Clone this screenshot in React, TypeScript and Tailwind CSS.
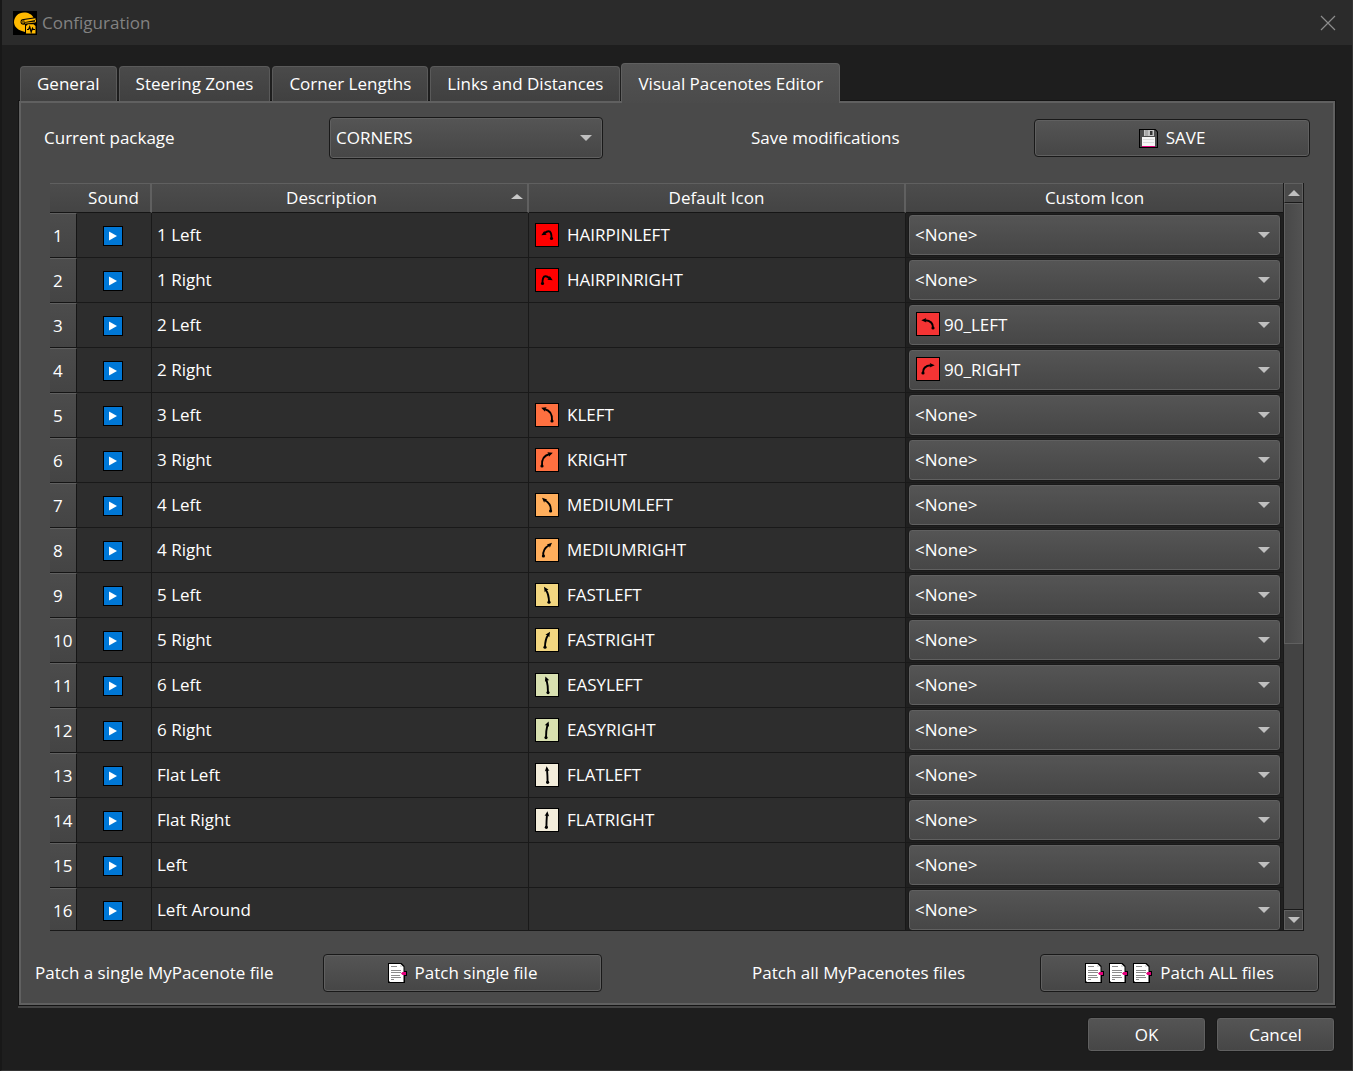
import { useState } from 'react';
import type { ReactNode } from 'react';

type Curve = { path: string; tip: [number, number]; angle: number; dot: [number, number] };

const curves: Record<string, Curve> = {
  hairpin: { path: 'M16.5 15.5C16.6 11 15.8 8.2 13.4 8.3C11.4 8.4 10.2 9.8 9 10.8', tip: [6.3, 12.2], angle: 150, dot: [16.5, 15.5] },
  ninety: { path: 'M17 16C17.2 11 14.5 8.6 9 8.3', tip: [5.3, 8.3], angle: 180, dot: [17, 16] },
  k: { path: 'M17 18C17.6 11.5 15.5 7.5 9.5 6', tip: [6.2, 4.8], angle: 200, dot: [17, 18] },
  medium: { path: 'M15.6 18C16.4 13 13.6 9.2 9.6 7', tip: [7, 4.8], angle: 222, dot: [15.6, 18] },
  fast: { path: 'M14 19.2C14 14 12.8 9.6 10.6 6.6', tip: [9, 3.8], angle: 238, dot: [14, 19.2] },
  easy: { path: 'M13 19.6C13.2 15 12.6 11 11.4 6', tip: [10.4, 3.4], angle: 250, dot: [13, 19.6] },
  flat: { path: 'M12.6 19.3C12.6 15 12.4 11 12 6', tip: [11.6, 3.2], angle: 264, dot: [12.6, 19.3] },
};

type Note = { curve: string; right?: boolean; fill: string; name: string };
type Row = { description: string; icon?: Note; custom?: Note };

const rows: Row[] = [
  { description: '1 Left', icon: { curve: 'hairpin', fill: '#ff0000', name: 'HAIRPINLEFT' } },
  { description: '1 Right', icon: { curve: 'hairpin', right: true, fill: '#ff0000', name: 'HAIRPINRIGHT' } },
  { description: '2 Left', custom: { curve: 'ninety', fill: '#f53434', name: '90_LEFT' } },
  { description: '2 Right', custom: { curve: 'ninety', right: true, fill: '#f53434', name: '90_RIGHT' } },
  { description: '3 Left', icon: { curve: 'k', fill: '#ff7040', name: 'KLEFT' } },
  { description: '3 Right', icon: { curve: 'k', right: true, fill: '#ff7040', name: 'KRIGHT' } },
  { description: '4 Left', icon: { curve: 'medium', fill: '#ffae5c', name: 'MEDIUMLEFT' } },
  { description: '4 Right', icon: { curve: 'medium', right: true, fill: '#ffae5c', name: 'MEDIUMRIGHT' } },
  { description: '5 Left', icon: { curve: 'fast', fill: '#f2d680', name: 'FASTLEFT' } },
  { description: '5 Right', icon: { curve: 'fast', right: true, fill: '#f2d680', name: 'FASTRIGHT' } },
  { description: '6 Left', icon: { curve: 'easy', fill: '#d8e0b0', name: 'EASYLEFT' } },
  { description: '6 Right', icon: { curve: 'easy', right: true, fill: '#d8e0b0', name: 'EASYRIGHT' } },
  { description: 'Flat Left', icon: { curve: 'flat', fill: '#f3eddb', name: 'FLATLEFT' } },
  { description: 'Flat Right', icon: { curve: 'flat', right: true, fill: '#f3eddb', name: 'FLATRIGHT' } },
  { description: 'Left' },
  { description: 'Left Around' },
];

const tabs = ['General', 'Steering Zones', 'Corner Lengths', 'Links and Distances', 'Visual Pacenotes Editor'];

function NoteIcon({ note }: { note: Note }) {
  const c = curves[note.curve];
  return (
    <svg className="size-6 shrink-0" viewBox="0 0 24 24" aria-hidden="true">
      <rect x="0.5" y="0.5" width="23" height="23" fill={note.fill} stroke="#000" />
      <g transform={note.right ? 'translate(24 0) scale(-1 1)' : undefined}>
        <path d={c.path} fill="none" stroke="#000" strokeWidth="1.9" />
        <circle cx={c.dot[0]} cy={c.dot[1]} r="1.6" />
        <path d="M0 0L-5 -2.3L-4 0L-5 2.3Z" transform={`translate(${c.tip[0]} ${c.tip[1]}) rotate(${c.angle})`} />
      </g>
    </svg>
  );
}

function AppLogo() {
  return (
    <svg className="size-6" viewBox="0 0 24 24" aria-hidden="true">
      <rect width="24" height="24" fill="#000" />
      <path d="M1 11.5C1 5.5 5.5 1.500 11 1.500C15.500 1.500 19 3.500 20.500 6.500L10.500 8C8.500 8 7.500 9.300 7.500 11C7.500 12.500 8.500 13.800 10.500 13.800L12 13.500V21C5.500 19.500 1.500 16.500 1 11.500Z" fill="#ffb900" />
      <circle cx="10" cy="10.900" r="1.200" fill="none" stroke="#ffb900" strokeWidth="0.800" />
      <path d="M11 9L22.500 7.200V9L12 11Z" fill="#ffb900" />
      <path d="M12 12.200L22.500 11V9" fill="none" stroke="#ffb900" strokeWidth="0.900" />
      <path d="M15 13.200H20.500L22.500 15V22.500H13V15Z" fill="#ffb900" />
      <path d="M14 18.500H15.500L16.700 15.800L18.200 21L19.500 17.200L20.300 18.500H22" fill="none" stroke="#000" strokeWidth="1.200" />
    </svg>
  );
}

function FloppyIcon() {
  return (
    <svg className="h-[19px] w-[19px]" viewBox="0 0 19 19" aria-hidden="true">
      <path d="M0 0H16.500L19 2.500V19H0Z" fill="#000" />
      <path d="M1 1H16L18 3V18H1Z" fill="#4c4c4c" />
      <path d="M5 1H15V7H5Z" fill="#c4c4c4" />
      <path d="M6 1H9V7H6Z" fill="#a8a8a8" />
      <path d="M11 2H13.500V6H11Z" fill="#333" />
      <path d="M3 8H16V17H3Z" fill="#f6f6f6" />
      <path d="M4 10.500H15M4 13.500H15" stroke="#dcdcdc" />
      <path d="M3 17H16V18H3Z" fill="#e3007b" />
    </svg>
  );
}

function DocumentIcon() {
  return (
    <svg className="h-5 w-[19px]" viewBox="0 0 19 20" aria-hidden="true">
      <path d="M0 0H13.500L16.500 3V8H19V13H17V20H0Z" fill="#000" />
      <path d="M1 1H12.500L15.500 4V19H2L1 18Z" fill="#fff" />
      <path d="M12 1V4H15.500" fill="#ddd" />
      <path d="M3 3.500H9M3 7.500H13M3 9.500H13M3 12.500H12M3 14.500H13M3 16.500H6" stroke="#8b8b8b" />
      <path d="M13 10.500L14.500 9H18V12H14.500Z" fill="#e3007b" />
    </svg>
  );
}

function Triangle({ up = false }: { up?: boolean }) {
  return (
    <svg className="h-1.5 w-3" viewBox="0 0 12 6" aria-hidden="true">
      <path d={up ? 'M0 6L6 0L12 6Z' : 'M0 0H12L6 6Z'} fill="#c0c0c0" />
    </svg>
  );
}

const face =
  'border border-[#191919] bg-linear-to-b from-[#555] to-[#464646] shadow-[inset_0_0_0_1px_#606060] text-white';

function PushButton({ children, className = '' }: { children: ReactNode; className?: string }) {
  return (
    <button type="button" className={`${face} flex items-center justify-center rounded ${className}`}>
      {children}
    </button>
  );
}

function Dropdown({ id, label, options, icon, className = '' }: {
  id?: string; label?: string; options: string[]; icon?: Note; className?: string;
}) {
  const [value, setValue] = useState(options[0]);
  return (
    <div className={`relative ${className}`}>
      <select
        id={id}
        aria-label={label}
        value={value}
        onChange={(e) => setValue(e.target.value)}
        className={`${face} block h-full w-full appearance-none rounded ${icon ? 'pl-[35px]' : 'pl-1.5'}`}
      >
        {options.map((o) => <option key={o}>{o}</option>)}
      </select>
      {icon && <span className="pointer-events-none absolute top-2 left-2"><NoteIcon note={icon} /></span>}
      <span className="pointer-events-none absolute inset-y-0 right-[11px] flex items-center"><Triangle /></span>
    </div>
  );
}

function HeaderCell({ children, last = false, sorted = false }: { children: ReactNode; last?: boolean; sorted?: boolean }) {
  return (
    <th
      scope="col"
      aria-sort={sorted ? 'ascending' : undefined}
      className={`relative h-[30px] border-t border-b border-t-[#606060] border-b-[#151515] bg-linear-to-b from-[#4c4c4c] to-[#444] p-0 font-normal ${last ? '' : 'border-r-2 border-r-[#606060]'} ${sorted ? 'pr-4' : ''}`}
    >
      {children}
      {sorted && <span className="absolute top-2.5 right-1 flex"><svg className="h-[5px] w-3" viewBox="0 0 12 5" aria-hidden="true"><path d="M0 5L6 0L12 5Z" fill="#c8c8c8" /></svg></span>}
    </th>
  );
}

function PacenoteTable() {
  return (
    <div className="flex min-h-0 flex-1 border-r border-b border-[#191919]">
      <div className="min-w-0 flex-1 overflow-hidden bg-[#2d2d2d]">
        <table className="w-full table-fixed border-separate border-spacing-0">
          <colgroup>
            <col className="w-[27px]" />
            <col className="w-[75px]" />
            <col />
            <col />
            <col />
          </colgroup>
          <thead>
            <tr>
              <td className="border-t border-b border-t-[#606060] border-b-[#151515] bg-linear-to-b from-[#4c4c4c] to-[#444] p-0" />
              <HeaderCell>Sound</HeaderCell>
              <HeaderCell sorted>Description</HeaderCell>
              <HeaderCell>Default Icon</HeaderCell>
              <HeaderCell last>Custom Icon</HeaderCell>
            </tr>
          </thead>
          <tbody>
            {rows.map((row, i) => (
              <tr key={row.description} className="h-[45px]">
                <th scope="row" className="border-t border-r border-b border-t-[#606060] border-r-[#151515] border-b-[#151515] bg-linear-to-b from-[#4c4c4c] to-[#444] p-0 pt-px pl-[3px] text-left font-normal">
                  {i + 1}
                </th>
                <td className="border-r border-b border-[#191919] p-0 pt-0.5 pr-0.5">
                  <button type="button" aria-label={`Play ${row.description}`} className="mx-auto flex size-5 items-center justify-center border border-black bg-[#0078d7]">
                    <svg className="h-2.5 w-2" viewBox="0 0 8 10" aria-hidden="true"><path d="M0 0.500L8 5L0 9.500Z" fill="#fff" /></svg>
                  </button>
                </td>
                <td className="border-r border-b border-[#191919] p-0 pl-[5px]">{row.description}</td>
                <td className="border-r border-b border-[#191919] p-0 pb-px pl-1.5">
                  {row.icon && <div className="flex items-center gap-2"><NoteIcon note={row.icon} />{row.icon.name}</div>}
                </td>
                <td className="border-b border-[#191919] bg-[#202020] p-0 px-0.5">
                  <Dropdown
                    label={`Custom icon for ${row.description}`}
                    options={row.custom ? [row.custom.name, '<None>'] : ['<None>']}
                    icon={row.custom}
                    className="h-[42px]"
                  />
                </td>
              </tr>
            ))}
          </tbody>
        </table>
      </div>
      <div className="flex w-5 flex-col border-l border-[#191919] bg-[#434343]">
        <button type="button" aria-label="Scroll up" className="flex h-5 items-center justify-center border border-[#606060] border-b-[#191919] bg-[#4a4a4a]"><Triangle up /></button>
        <div className="flex min-h-0 flex-1 flex-col border-b border-[#191919]">
          <div className="h-5/8 border border-[#606060] bg-linear-to-r from-[#484848] to-[#525252]" />
        </div>
        <button type="button" aria-label="Scroll down" className="flex h-5 items-center justify-center border border-[#606060] bg-[#4a4a4a]"><Triangle /></button>
      </div>
    </div>
  );
}

export default function App() {
  const active = 4;
  return (
    <div className="flex h-screen flex-col border-r border-b border-l-2 border-[#343434] border-l-[#181818] bg-[#1e1e1e] font-['Open_Sans',sans-serif] text-[17px] leading-6 text-white">
      <header className="flex h-[45px] shrink-0 items-center bg-[#2b2b2b] pr-4 pl-[11px] text-[#828282]">
        <AppLogo />
        <h1 className="pl-[5px]">Configuration</h1>
        <button type="button" aria-label="Close" className="ml-auto">
          <svg className="size-4" viewBox="0 0 16 16" aria-hidden="true"><path d="M1 1L15 15M15 1L1 15" stroke="#8c8c8c" strokeWidth="1.200" /></svg>
        </button>
      </header>

      <main className="flex min-h-0 flex-1 flex-col px-[17px] pt-[18px] pb-[18px]">
        <div role="tablist" className="relative z-10 flex items-end">
          {tabs.map((tab, i) => (
            <button
              key={tab}
              type="button"
              role="tab"
              aria-selected={i === active}
              className={
                i === active
                  ? '-mb-0.5 h-10 rounded-t border border-b-0 border-[#606060] bg-linear-to-b from-[#535353] to-[#4b4b4b] px-4'
                  : 'mr-px ml-px h-[35px] rounded-t border border-b-0 border-[#5a5a5a] bg-linear-to-b from-[#4a4a4a] to-[#404040] px-4'
              }
            >
              {tab}
            </button>
          ))}
        </div>

        <section role="tabpanel" className="flex min-h-0 flex-1 flex-col border-2 border-[#606060] bg-[#4a4a4a] px-3.5 pt-3.5 pb-[11px] shadow-[0_0_0_1px_#141414,0_2px_0_1px_#444]">
          <div className="ml-[9px] mr-[9px] grid grid-cols-[285fr_422fr_283fr_276fr] items-center">
            <label htmlFor="package">Current package</label>
            <Dropdown id="package" options={['CORNERS']} className="mr-[148px] h-[42px]" />
            <span>Save modifications</span>
            <PushButton className="h-[38px] gap-2"><FloppyIcon />SAVE</PushButton>
          </div>

          <div className="mt-6 mb-[23px] mr-[15px] ml-[15px] flex min-h-0 flex-1 flex-col">
            <PacenoteTable />
          </div>

          <div className="grid grid-cols-[288fr_429fr_288fr_279fr] items-center">
            <span>Patch a single MyPacenote file</span>
            <PushButton className="mr-[150px] h-[38px] gap-2"><DocumentIcon />Patch single file</PushButton>
            <span>Patch all MyPacenotes files</span>
            <PushButton className="h-[38px] gap-2">
              <span className="flex gap-[5px]"><DocumentIcon /><DocumentIcon /><DocumentIcon /></span>
              Patch ALL files
            </PushButton>
          </div>
        </section>

        <footer className="mt-3 flex shrink-0 justify-end gap-2.5">
          <PushButton className="h-[35px] w-[119px]">OK</PushButton>
          <PushButton className="h-[35px] w-[119px]">Cancel</PushButton>
        </footer>
      </main>
    </div>
  );
}
